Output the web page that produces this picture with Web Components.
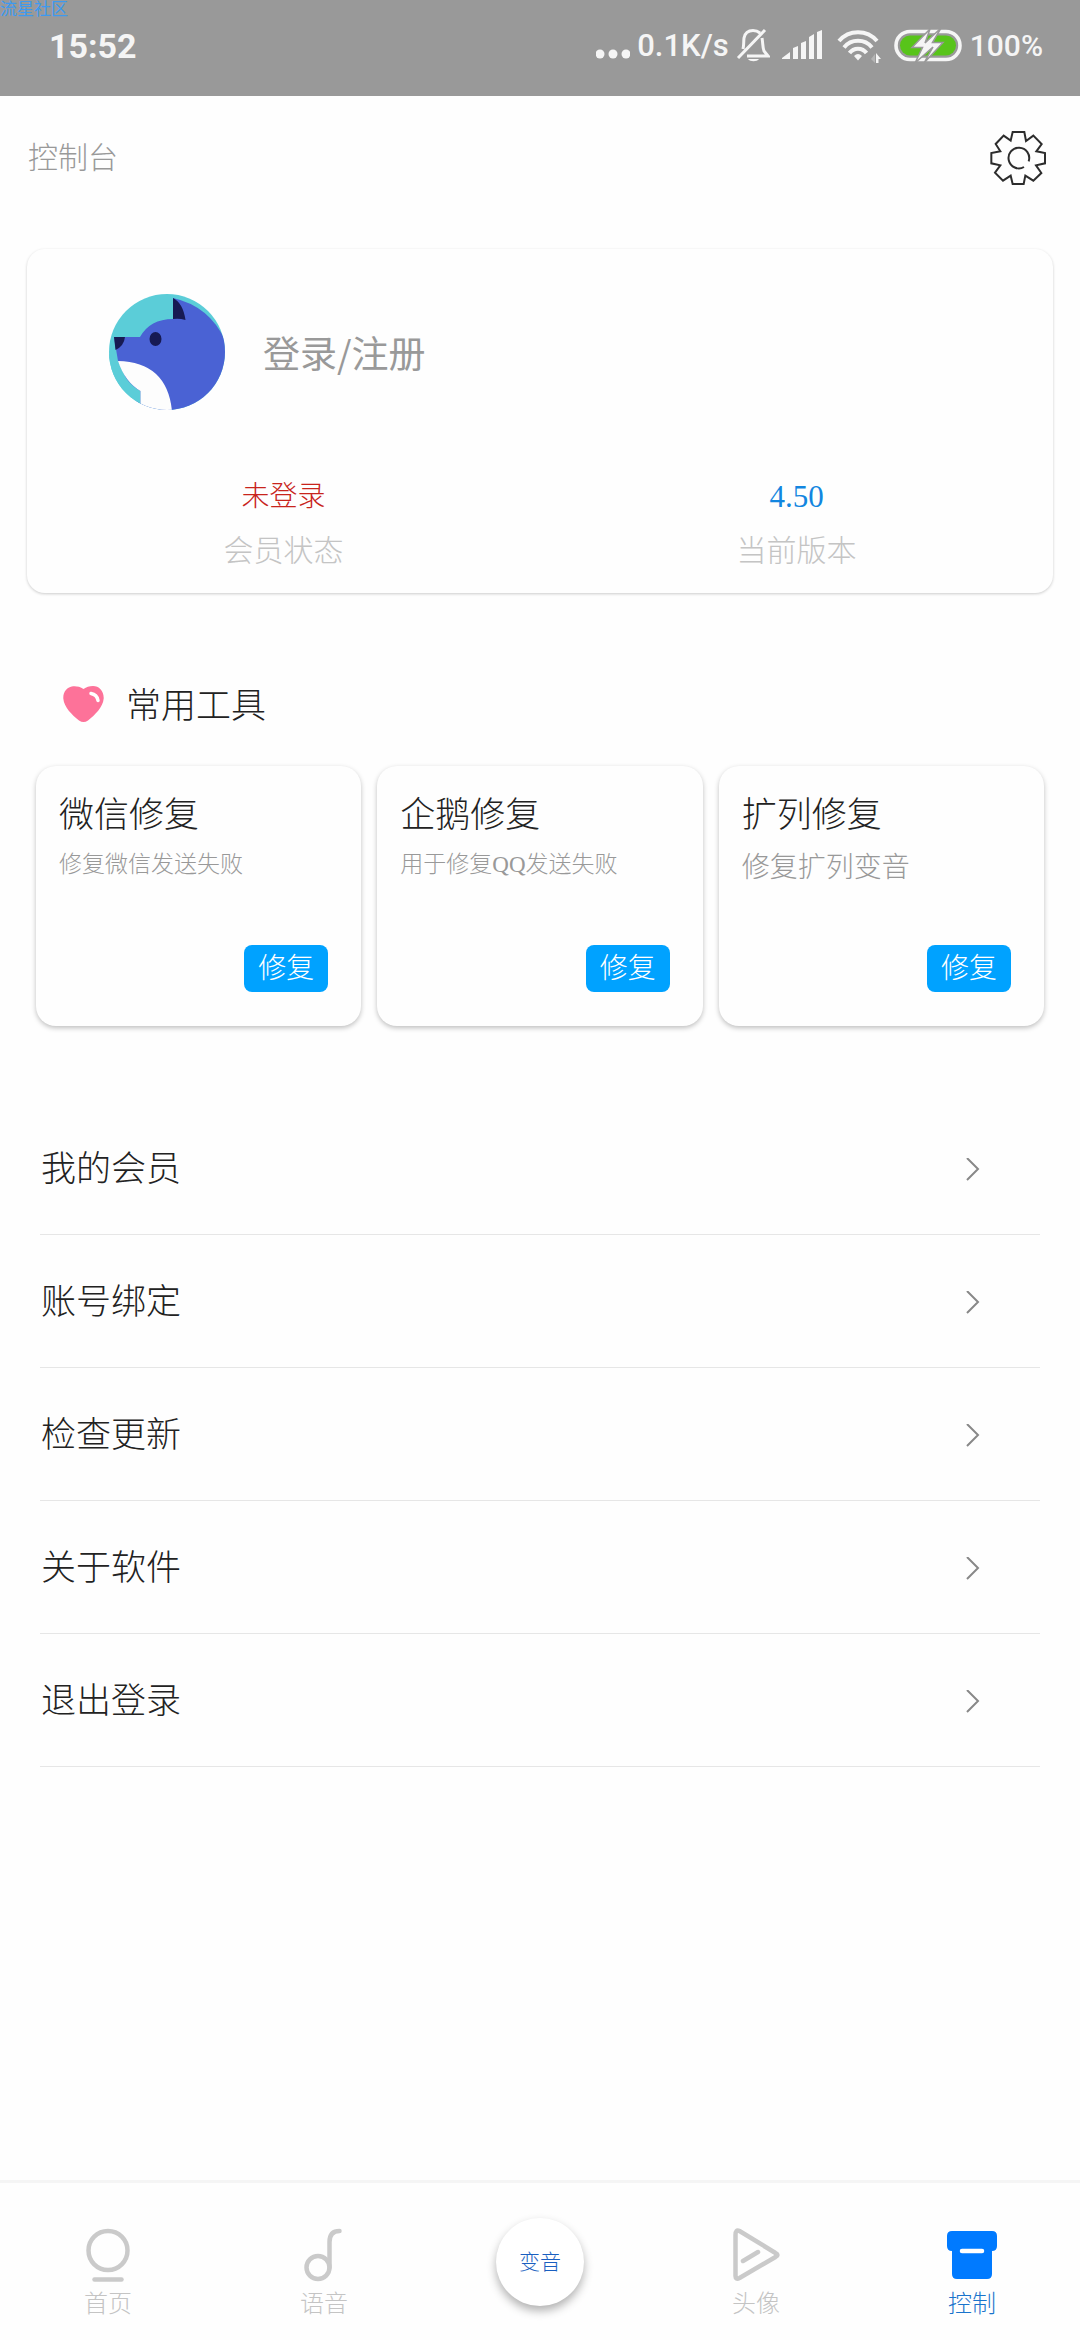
<!DOCTYPE html>
<html lang="zh-CN">
<head>
<meta charset="utf-8">
<meta name="viewport" content="width=device-width, initial-scale=1">
<title>控制台</title>
<style>
  body {
    margin: 0;
    background: #fefefe;
    color: #222;
    font-family: "Liberation Serif", "Noto Sans CJK SC", serif;
    font-weight: 300;
  }
</style>
</head>
<body>
<console-app>
  <status-bar slot="status" time="15:52" speed="0.1K/s" battery="100%">流星社区</status-bar>
  <page-header slot="header">控制台</page-header>

  <profile-card>
    <span slot="name">登录/注册</span>
    <stat-item label="会员状态" style="--value-color: #c8241c">未登录</stat-item>
    <stat-item label="当前版本" style="--value-color: #1286e0; --value-size: 31px">4.50</stat-item>
  </profile-card>

  <tool-section heading="常用工具">
    <tool-card heading="微信修复" action="修复">修复微信发送失败</tool-card>
    <tool-card heading="企鹅修复" action="修复">用于修复QQ发送失败</tool-card>
    <tool-card heading="扩列修复" action="修复" large>修复扩列变音</tool-card>
  </tool-section>

  <menu-list>
    <menu-row>我的会员</menu-row>
    <menu-row>账号绑定</menu-row>
    <menu-row>检查更新</menu-row>
    <menu-row>关于软件</menu-row>
    <menu-row>退出登录</menu-row>
  </menu-list>

  <tab-bar slot="tabs">
    <tab-item icon="home">首页</tab-item>
    <tab-item icon="note">语音</tab-item>
    <round-button>变音</round-button>
    <tab-item icon="play">头像</tab-item>
    <tab-item icon="box" active>控制</tab-item>
  </tab-bar>
</console-app>

<script>
class BaseElement extends HTMLElement {
  constructor() {
    super();
    this.attachShadow({ mode: 'open' });
  }

  connectedCallback() {
    this.shadowRoot.innerHTML = this.render();
  }

  attr(name) {
    return this.getAttribute(name) || '';
  }
}

class ConsoleApp extends BaseElement {
  render() {
    return `
      <style>
        :host {
          display: flex;
          flex-direction: column;
          min-height: 100vh;
        }
        main {
          flex: 1;
          padding-top: 29px;
        }
      </style>
      <slot name="status"></slot>
      <slot name="header"></slot>
      <main><slot></slot></main>
      <slot name="tabs"></slot>
    `;
  }
}

class StatusBar extends BaseElement {
  render() {
    return `
      <style>
        :host {
          display: flex;
          align-items: center;
          justify-content: space-between;
          box-sizing: border-box;
          height: 96px;
          padding: 0 37px 4px 49px;
          position: relative;
          background: #999;
          color: #f5f5f5;
          font-family: Roboto, sans-serif;
          font-size: 34px;
          line-height: 40px;
        }
        .mark {
          position: absolute;
          top: 0;
          left: 0;
          color: #3c9af0;
          font-family: "Liberation Sans", "Noto Sans CJK SC", sans-serif;
          font-size: 17px;
          font-weight: 400;
          line-height: 20px;
        }
        time { font-weight: 700; }
        .icons {
          display: flex;
          align-items: center;
          gap: 7px;
          font-weight: 500;
        }
        .speed { font-size: 31px; }
        .battery { font-size: 30px; }
        svg { display: block; }
      </style>
      <span class="mark"><slot></slot></span>
      <time>${this.attr('time')}</time>
      <div class="icons">
        <svg width="34" height="40" fill="#f5f5f5">
          <circle cx="4" cy="28" r="4.5"/><circle cx="17" cy="28" r="4.5"/><circle cx="30" cy="28" r="4.5"/>
        </svg>
        <span class="speed">${this.attr('speed')}</span>
        <svg width="34" height="40" fill="none" stroke="#f5f5f5" stroke-width="3">
          <path d="M2 32 29 4M7 23c1-4 .5-7 1-11C9 7 12 4.500 17 4.500c3 0 5 .8 7 2.500M26 12c1 5 .5 9 2 13l4 5H11"/>
          <path d="M12 33h11c-2 3-9 3-11 0z" fill="#f5f5f5" stroke="none"/>
        </svg>
        <svg width="50" height="40" fill="#f5f5f5">
          <path d="M5 32l8-6v7H5zM16 22l5-2v13h-5zM24 17l5-2v18h-5zM32 11l5-3v25h-5zM40 6l5-2v29h-5z"/>
        </svg>
        <svg width="51" height="40" fill="none" stroke="#f5f5f5" stroke-width="4">
          <path d="M5 15a25 25 0 0 1 38 0M10 21.500a18 18 0 0 1 28 0M15.500 27a10.500 10.500 0 0 1 17 0"/>
          <path d="M20 30q4-4 8 0l-4 4.500z" fill="#f5f5f5" stroke="none"/>
          <path d="M37 33l4-5v9z" fill="#b5b5b5" stroke="none"/>
          <path d="M42 27l5 6h-2.500v4H42z" fill="#f5f5f5" stroke="none"/>
        </svg>
        <svg width="71" height="40">
          <rect x="4" y="5.500" width="64" height="28" rx="14" fill="none" stroke="#f5f5f5" stroke-width="3.600"/>
          <rect x="8" y="9.500" width="56" height="20" rx="10" fill="#58c41a"/>
          <path d="M38 3 20 21.500h10.500L23 37 41 21l-9 16 19-20.500H40.500L49 2 33 17z" fill="#f5f5f5" stroke="#999" stroke-width="1.500"/>
        </svg>
        <span class="battery">${this.attr('battery')}</span>
      </div>
    `;
  }
}

class PageHeader extends BaseElement {
  render() {
    return `
      <style>
        :host {
          display: flex;
          align-items: center;
          justify-content: space-between;
          padding: 34px 34px 34px 28px;
        }
        h1 {
          margin: 0;
          color: #999;
          font-size: 30px;
          font-weight: 300;
          line-height: 40px;
        }
        button {
          padding: 0;
          border: 0;
          background: none;
        }
        svg { display: block; }
      </style>
      <h1><slot></slot></h1>
      <button aria-label="设置">
        <svg width="56" height="56" viewBox="1258 389 168 168" fill="none" stroke="#2d2d2d" stroke-width="6">
          <path d="M1326 395h35l5 27 22-16 25 25-16 22 26 5v31l-27 6 16 23-24 23-24-15-5 25h-33l-6-25-23 15-24-24 16-22-27-6v-31l27-5-14-22 24-25 21 15z"/>
          <path d="M1374 483a31 31 0 1 0-14 17"/>
        </svg>
      </button>
    `;
  }
}

class ProfileCard extends BaseElement {
  render() {
    return `
      <style>
        :host {
          display: block;
          margin: 0 27px;
          padding: 45px 0 22px;
          border-radius: 18px;
          background: #fefefe;
          box-shadow: 0 1px 3px rgba(0, 0, 0, 0.2);
        }
        .user {
          display: flex;
          align-items: center;
          gap: 38px;
          padding-left: 82px;
          color: #999;
          font-family: "Noto Sans CJK SC", sans-serif;
          font-size: 37px;
          font-weight: 400;
          line-height: 44px;
        }
        svg { display: block; }
        .stats {
          display: grid;
          grid-template-columns: 1fr 1fr;
          margin-top: 67px;
        }
      </style>
      <div class="user">
        <svg width="116" height="116" viewBox="0 0 116 116">
          <clipPath id="round"><circle cx="58" cy="58" r="58"/></clipPath>
          <g clip-path="url(#round)">
            <rect width="116" height="116" fill="#5bcdd8"/>
            <path d="M5 43h26q10-18 33-18V4q36 8 52 42v70H31L9 67z" fill="#4a62d4"/>
            <path d="M64 4q10 5 12.500 22Q70 24 64 25z" fill="#171a52"/>
            <path d="M5 43h11q-1 9-9.500 13z" fill="#171a52"/>
            <ellipse cx="46.500" cy="45" rx="6" ry="7" fill="#171a52"/>
            <path d="M0 60L9 67q7 22 22.500 30v20H0z" fill="#5bcdd8"/>
            <path d="M9 67Q58 68 63 117H31.500V97Q16 88 9 67z" fill="#fdfdfd"/>
          </g>
        </svg>
        <slot name="name"></slot>
      </div>
      <div class="stats"><slot></slot></div>
    `;
  }
}

class StatItem extends BaseElement {
  render() {
    return `
      <style>
        :host {
          display: flex;
          flex-direction: column;
          align-items: center;
          gap: 14px;
          line-height: 40px;
        }
        .value {
          color: var(--value-color);
          font-size: var(--value-size, 28px);
        }
        .label {
          color: #c4c4c4;
          font-size: 30px;
        }
      </style>
      <span class="value"><slot></slot></span>
      <span class="label">${this.attr('label')}</span>
    `;
  }
}

class ToolSection extends BaseElement {
  render() {
    return `
      <style>
        :host {
          display: block;
          margin: 93px 36px 76px;
        }
        h2 {
          display: flex;
          align-items: flex-start;
          gap: 22px;
          margin: 0 0 38px 27px;
          font-size: 35px;
          font-weight: 300;
          line-height: 42px;
        }
        .cards {
          display: grid;
          grid-template-columns: repeat(3, 1fr);
          gap: 16px;
        }
      </style>
      <h2>
        <svg width="41" height="36" viewBox="0 0 41 36">
          <path d="M20.500 3C17 .5 13 0 10 .3 4 1 0 6 .3 12.500 1 21 9 29 16 34.500c3 2 6 2 9 0C32 29 40 21 40.700 12.500 41 5 36 0 30 0c-4 0-6.500 1-9.500 3z" fill="#fd7299"/>
          <path d="M28 7.500q6 1 7 7" fill="none" stroke="#fff" stroke-width="3.500" stroke-linecap="round"/>
        </svg>
        ${this.attr('heading')}
      </h2>
      <div class="cards"><slot></slot></div>
    `;
  }
}

class ToolCard extends BaseElement {
  render() {
    return `
      <style>
        :host {
          display: flex;
          flex-direction: column;
          box-sizing: border-box;
          min-height: 260px;
          padding: 26px 33px 34px 23px;
          border-radius: 20px;
          background: #fefefe;
          box-shadow: 0 2px 5px rgba(0, 0, 0, 0.25);
        }
        h3 {
          margin: 0;
          font-size: 35px;
          font-weight: 300;
          line-height: 48px;
        }
        p {
          margin: 8px 0 0;
          color: #999;
          font-size: 23px;
          line-height: 34px;
          white-space: nowrap;
        }
        :host([large]) p {
          font-size: 28px;
          line-height: 40px;
        }
        button {
          align-self: flex-end;
          margin-top: auto;
          padding: 0 14px;
          border: 0;
          border-radius: 8px;
          background: #00a2ff;
          color: #fff;
          font: inherit;
          font-size: 28px;
          line-height: 47px;
        }
      </style>
      <h3>${this.attr('heading')}</h3>
      <p><slot></slot></p>
      <button>${this.attr('action')}</button>
    `;
  }
}

class MenuList extends BaseElement {
  render() {
    return `
      <style>
        :host {
          display: block;
          margin: 0 40px;
        }
      </style>
      <nav><slot></slot></nav>
    `;
  }
}

class MenuRow extends BaseElement {
  render() {
    return `
      <style>
        :host {
          display: block;
          border-bottom: 1px solid #e6e6e6;
        }
        a {
          display: flex;
          align-items: center;
          justify-content: space-between;
          padding: 4px 60px 0 1px;
          color: inherit;
          font-size: 35px;
          line-height: 128px;
          text-decoration: none;
        }
      </style>
      <a href="#">
        <slot></slot>
        <svg width="14" height="24" fill="none" stroke="#888" stroke-width="2">
          <path d="M1 0l11 11L1 22"/>
        </svg>
      </a>
    `;
  }
}

class TabBar extends BaseElement {
  render() {
    return `
      <style>
        :host {
          display: block;
          border-top: 3px solid #f5f5f5;
        }
        nav {
          display: grid;
          grid-template-columns: repeat(5, 1fr);
          align-items: center;
        }
      </style>
      <nav><slot></slot></nav>
    `;
  }
}

const tabIcons = {
  home: `<circle cx="27" cy="22.500" r="19.500"/><path d="M13.500 51.500h27"/>`,
  note: `<circle cx="21" cy="39.500" r="11.500"/><path d="M32.500 39.500V14q0-11 10-11"/>`,
  play: `<path d="M6.500 7v41q0 4 4 2l36-21q4-2 0-4l-36-22q-4-2-4 4zM14 33l15-9"/>`,
  box: `<path d="M7 3h40q5 0 5 5v10q0 5-5 5v23q0 5-5 5H12q-5 0-5-5V23q-5 0-5-5V8q0-5 5-5z" fill="#007aff" stroke="none"/>
        <path d="M17 23h20" stroke="#fff"/>`,
};

class TabItem extends BaseElement {
  render() {
    return `
      <style>
        :host { display: block; }
        a {
          display: flex;
          flex-direction: column;
          align-items: center;
          gap: 6px;
          padding: 45px 0 20px;
          color: #c4c4c4;
          font-size: 24px;
          line-height: 32px;
          text-decoration: none;
        }
        :host([active]) a { color: #1a74cc; }
      </style>
      <a href="#">
        <svg width="54" height="54" fill="none" stroke="#cacaca" stroke-width="4.500" stroke-linecap="round" stroke-linejoin="round">
          ${tabIcons[this.attr('icon')]}
        </svg>
        <slot></slot>
      </a>
    `;
  }
}

class RoundButton extends BaseElement {
  render() {
    return `
      <style>
        :host {
          display: flex;
          justify-content: center;
        }
        button {
          width: 88px;
          height: 88px;
          padding: 0 0 4px;
          border: 0;
          border-radius: 50%;
          background: #fff;
          box-shadow: 0 5px 10px rgba(0, 0, 0, 0.3);
          color: #1a5fc0;
          font: inherit;
          font-size: 21px;
        }
      </style>
      <button><slot></slot></button>
    `;
  }
}

customElements.define('console-app', ConsoleApp);
customElements.define('status-bar', StatusBar);
customElements.define('page-header', PageHeader);
customElements.define('profile-card', ProfileCard);
customElements.define('stat-item', StatItem);
customElements.define('tool-section', ToolSection);
customElements.define('tool-card', ToolCard);
customElements.define('menu-list', MenuList);
customElements.define('menu-row', MenuRow);
customElements.define('tab-bar', TabBar);
customElements.define('tab-item', TabItem);
customElements.define('round-button', RoundButton);
</script>
</body>
</html>
